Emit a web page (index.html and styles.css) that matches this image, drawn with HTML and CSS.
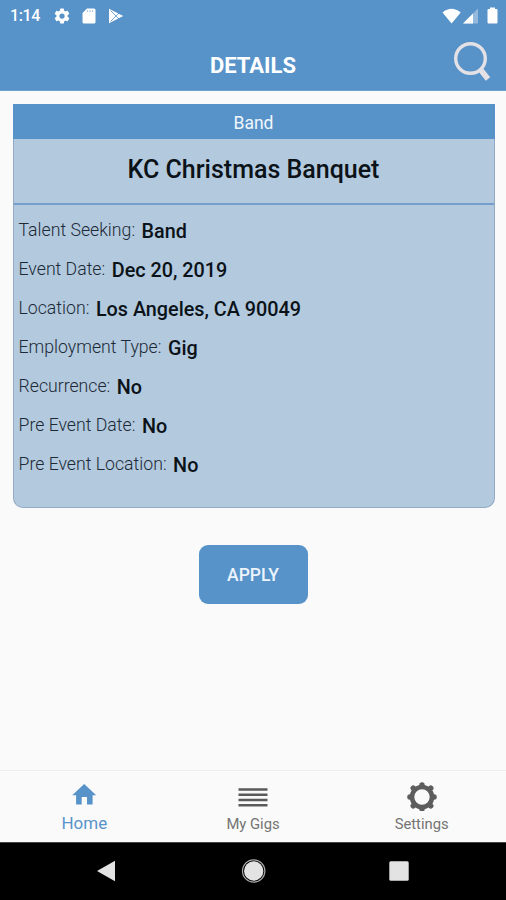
FILE: index.html
```html
<!DOCTYPE html>
<html lang="en">
<head>
<meta charset="utf-8">
<title>Details</title>
<link rel="stylesheet" href="styles.css">
</head>
<body>
<header class="top">
  <div class="status">
    <span class="clock">1:14</span>
    <svg class="st-gear" width="18" height="18" viewBox="0 0 24 24" fill="#fff"><path d="M19.4 13a7.5 7.5 0 0 0 0-2l2.100-1.650a.5.5 0 0 0 .12-.64l-2-3.460a.5.5 0 0 0-.61-.22l-2.490 1a7.300 7.300 0 0 0-1.690-.98l-.38-2.650A.5.5 0 0 0 14 2h-4a.5.5 0 0 0-.49.42l-.38 2.650c-.61.25-1.170.59-1.690.98l-2.490-1a.5.5 0 0 0-.61.22l-2 3.460a.5.5 0 0 0 .12.64L4.600 11a7.900 7.900 0 0 0 0 2l-2.110 1.650a.5.5 0 0 0-.12.64l2 3.460c.12.22.39.3.61.22l2.490-1c.52.4 1.080.73 1.690.98l.38 2.650c.03.24.24.4.49.4h4c.25 0 .46-.16.49-.4l.38-2.650c.61-.25 1.170-.59 1.690-.98l2.490 1c.23.09.49 0 .61-.22l2-3.460a.5.5 0 0 0-.12-.64zM12 15.500a3.500 3.500 0 1 1 0-7 3.500 3.500 0 0 1 0 7z"/></svg>
    <svg class="st-card" width="14" height="16" viewBox="0 0 14 16"><path d="M5 .5h7Q13.500.5 13.500 2v12q0 1.500-1.500 1.500H2Q.5 15.500.5 14V5z" fill="#fff"/><path d="M5.500 2.300v1.600M8 2.300v1.600M10.500 2.300v1.600" stroke="#a5c4e0" stroke-width="1.200"/></svg>
    <svg class="st-play" width="16" height="16" viewBox="0 0 16 16"><path d="M1 .8 15.200 8 1 15.200z" fill="#fff"/><path d="M2.500 2.500 11 11M2.500 13.500 11 5" stroke="#5793c9" stroke-width=".8"/></svg>
    <svg class="st-wifi" width="20" height="16" viewBox="0 0 20 16"><path d="M.5 4.500Q9.500-3 18.700 4.500L9.600 15.500z" fill="#fff"/></svg>
    <svg class="st-cell" width="16" height="16" viewBox="0 0 16 16"><path d="M15 .5v15H0z" fill="#94b9dc"/><path d="M10 5.500v10H0z" fill="#fff"/></svg>
    <svg class="st-batt" width="11" height="17" viewBox="0 0 11 17"><path d="M3 .5h5V2h1.500q1 0 1 1v12.500q0 1-1 1h-8q-1 0-1-1V3q0-1 1-1H3z" fill="#fff"/></svg>
  </div>
  <div class="bar">
    <h1 class="title">DETAILS</h1>
    <svg class="search" width="40" height="40" viewBox="0 0 40 40" fill="none" stroke="#e3e1e5"><circle cx="17.500" cy="17.500" r="14.800" stroke-width="3.400"/><path d="M27.200 28.200 35 38" stroke-width="5.600"/></svg>
  </div>
</header>
<main class="content">
  <section class="card">
    <div class="category">Band</div>
    <h2 class="name">KC Christmas Banquet</h2>
    <div class="rows">
      <div class="row"><span class="label">Talent Seeking:</span><span class="value">Band</span></div>
      <div class="row"><span class="label">Event Date:</span><span class="value">Dec 20, 2019</span></div>
      <div class="row"><span class="label">Location:</span><span class="value">Los Angeles, CA 90049</span></div>
      <div class="row"><span class="label">Employment Type:</span><span class="value">Gig</span></div>
      <div class="row"><span class="label">Recurrence:</span><span class="value">No</span></div>
      <div class="row"><span class="label">Pre Event Date:</span><span class="value">No</span></div>
      <div class="row"><span class="label">Pre Event Location:</span><span class="value">No</span></div>
    </div>
  </section>
  <button class="apply">APPLY</button>
</main>
<nav class="tabs">
  <a class="tab active"><svg width="30" height="32" viewBox="0 0 30 32"><path d="M15.200 5 27.200 16.200h-3.600V25.500H18v-7.500h-5.300v7.500H7.100v-9.300H3.200z" fill="#5793c9"/></svg><span class="tab-text">Home</span></a>
  <a class="tab"><svg width="30" height="32" viewBox="0 0 30 32"><path d="M.5 10.500h29M.5 15.800h29M.5 21h29M.5 26.300h29" stroke="#5a5a5a" stroke-width="2.600"/></svg><span class="tab-text">My Gigs</span></a>
  <a class="tab"><svg width="30" height="32" viewBox="0 0 30 32"><g transform="translate(15 18)" fill="none" stroke="#5d5d5d"><circle r="10" stroke-width="4.600"/><path stroke-width="5.400" stroke-linecap="round" d="M0-11.500v-.6M0 11.500v.6M-11.500 0h-.6M11.500 0h.6M8.300 8.300l.5.5M-8.300 8.300l-.5.5M8.300-8.300l.5-.5M-8.300-8.300l-.5-.5"/></g></svg><span class="tab-text">Settings</span></a>
</nav>
<footer class="system">
  <svg class="sys-back" width="20" height="22" viewBox="0 0 20 22"><path d="M1 11 19 .8v20.400z" fill="#e3e3e3"/></svg>
  <svg class="sys-home" width="26" height="26" viewBox="0 0 26 26"><circle cx="12.700" cy="13" r="11.200" fill="none" stroke="#aaa" stroke-width="1.200"/><circle cx="12.700" cy="13" r="9.700" fill="#e3e3e3"/></svg>
  <svg class="sys-recent" width="20" height="20" viewBox="0 0 20 20"><rect x=".3" y=".3" width="19.400" height="19.400" rx="1.500" fill="#e3e3e3"/></svg>
</footer>
</body>
</html>
```
FILE: styles.css
```css
* { box-sizing: border-box; }
body {
  margin: 0;
  width: 506px;
  height: 900px;
  display: flex;
  flex-direction: column;
  overflow: hidden;
  background: #fafafa;
  color: #0b1218;
  font-family: Roboto, sans-serif;
}
svg { display: block; flex: none; }
.top {
  height: 91px;
  background: #5793c9;
  border-bottom: 1px solid #6c9fce;
  color: #fff;
}
.status {
  height: 31px;
  display: flex;
  align-items: center;
  padding: 0 8px 0 10px;
}
.clock { width: 43px; font-size: 16px; font-weight: 500; line-height: 20px; letter-spacing: -0.4px; }
.st-card { margin-left: 11px; }
.st-play { margin-left: 12px; }
.st-wifi { margin-left: auto; }
.st-cell { margin-left: 1px; }
.st-batt { margin-left: 8px; }
.bar {
  height: 59px;
  display: grid;
  grid-template-columns: 53px 1fr 53px;
}
.title {
  grid-column: 2;
  margin: 21px 0 0;
  text-align: center;
  font-size: 22px;
  line-height: 28px;
  font-weight: 700;
}
.search { margin: 10px 0 0 0; }
.content {
  flex: 1;
  display: flex;
  flex-direction: column;
  align-items: center;
  padding-top: 13px;
}
.card {
  width: 482px;
  height: 404px;
  margin-left: 1px;
  border: 1px solid #93aac6;
  border-top: 0;
  border-radius: 0 0 10px 10px;
  background: #b2c9de;
}
.category {
  height: 35px;
  margin: 0 -1px;
  background: #5793c9;
  color: #f1f6fb;
  text-align: center;
  font-size: 17.500px;
  line-height: 38px;
}
.name {
  height: 66px;
  margin: 0;
  border-bottom: 2px solid #759fce;
  text-align: center;
  font-size: 25px;
  line-height: 62px;
  font-weight: 500;
}
.rows { padding: 6px 5px; }
.row { height: 39px; display: flex; gap: 6.500px; }
.label { color: #1d2a36; font-size: 17.700px; font-weight: 300; line-height: 38px; }
.value { font-size: 19.800px; font-weight: 500; line-height: 41px; }
.apply {
  width: 109px;
  height: 59px;
  margin-top: 37px;
  padding: 1px 0 0;
  border: 0;
  border-radius: 9px;
  background: #5793c9;
  color: #edf4fc;
  font: 500 17.500px/24px Roboto, sans-serif;
}
.tabs {
  height: 72px;
  display: grid;
  grid-template-columns: repeat(3, 1fr);
  border-top: 1px solid #eeeeee;
}
.tab {
  display: flex;
  flex-direction: column;
  align-items: center;
  padding-top: 8px;
  color: #747474;
  font-size: 14.800px;
  line-height: 24px;
}
.active { color: #5793c9; font-size: 17px; }
.tab-text { margin-top: 1px; }
.active .tab-text { margin-top: 0; }
.system {
  height: 58px;
  display: flex;
  align-items: center;
  padding: 0 0 2px 96px;
  border-top: 1px solid #444;
  background: #000;
}
.sys-home { margin-left: 125px; }
.sys-recent { margin-left: 122px; }
```
